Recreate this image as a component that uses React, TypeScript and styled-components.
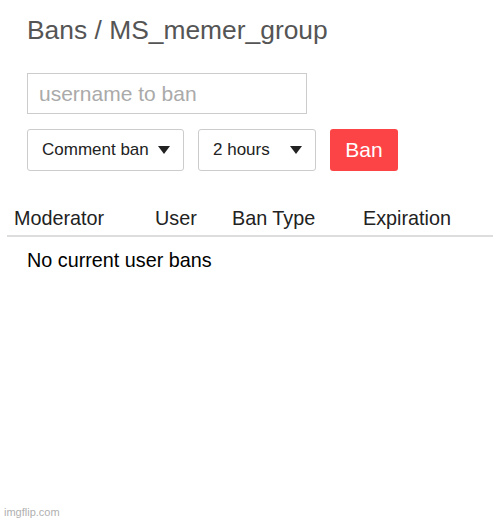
import React from 'react';
import styled, { createGlobalStyle } from 'styled-components';

const GlobalStyle = createGlobalStyle`
  html, body {
    margin: 0;
    padding: 0;
    background: #ffffff;
  }

  body {
    font-family: 'Liberation Sans', Arial, sans-serif;
  }
`;

const columns = ['Moderator', 'User', 'Ban Type', 'Expiration'];
const columnWidths = [141, 77, 131, 100];

function App() {
  return (
    <>
      <GlobalStyle />
      <Page>
        <Form>
          <Title>Bans / MS_memer_group</Title>
          <UsernameInput placeholder="username to ban" />
          <Controls>
            <Select $width={157}>
              <span>Comment ban</span>
              <Caret />
            </Select>
            <Select $width={118}>
              <span>2 hours</span>
              <Caret />
            </Select>
            <BanButton>Ban</BanButton>
          </Controls>
        </Form>
        <Table>
          <HeaderRow>
            {columns.map((col, i) => (
              <HeaderCell key={col} style={{ width: columnWidths[i] }}>
                {col}
              </HeaderCell>
            ))}
          </HeaderRow>
          <EmptyMessage>No current user bans</EmptyMessage>
        </Table>
        <Watermark>imgflip.com</Watermark>
      </Page>
    </>
  );
}
export default App;

const Page = styled.div`
  position: relative;
  width: 500px;
  height: 521px;
  overflow: hidden;
  background: #ffffff;
`;

const Form = styled.div`
  display: flex;
  flex-direction: column;
  align-items: flex-start;
  padding: 14px 0 0 27px;
`;

const Title = styled.h1`
  margin: 0;
  font-size: 26.4px;
  font-weight: 400;
  line-height: 32px;
  color: #555555;
`;

const UsernameInput = styled.input`
  box-sizing: border-box;
  width: 280px;
  height: 41px;
  margin-top: 27px;
  padding: 0 11px;

  border: 1px solid #cccccc;
  border-radius: 0;
  outline: none;

  font-family: 'Liberation Sans', Arial, sans-serif;
  font-size: 21px;
  color: #333333;

  &::placeholder {
    color: #aaaaaa;
  }
`;

const Controls = styled.div`
  display: flex;
  column-gap: 14px;
  margin-top: 15px;
`;

const Select = styled.div<{ $width: number }>`
  box-sizing: border-box;
  display: flex;
  align-items: center;
  justify-content: space-between;

  width: ${({ $width }) => $width}px;
  height: 42px;
  padding: 0 13px 0 14px;

  border: 1px solid #cccccc;
  border-radius: 3px;
  background: #ffffff;

  font-size: 17px;
  color: #222222;
`;

const Caret = styled.span`
  width: 0;
  height: 0;
  border-left: 6px solid transparent;
  border-right: 6px solid transparent;
  border-top: 8px solid #222222;
`;

const BanButton = styled.button`
  box-sizing: border-box;
  width: 68px;
  height: 42px;
  padding: 0;

  border: none;
  border-radius: 3px;
  background: #fc4447;

  font-family: 'Liberation Sans', Arial, sans-serif;
  font-size: 21px;
  color: #ffffff;
`;

const Table = styled.div`
  margin-top: 35px;
  padding: 0 7px;
`;

const HeaderRow = styled.div`
  display: flex;
  padding: 0 0 5px 7px;
  border-bottom: 2px solid #dddddd;
`;

const HeaderCell = styled.div`
  font-size: 19.8px;
  line-height: 24px;
  color: #222222;
`;

const EmptyMessage = styled.div`
  padding: 11px 0 0 20px;
  font-size: 19.8px;
  line-height: 24px;
  color: #000000;
`;

const Watermark = styled.div`
  position: absolute;
  left: 4px;
  bottom: 3px;
  font-size: 11px;
  color: #b0b0b0;
`;
